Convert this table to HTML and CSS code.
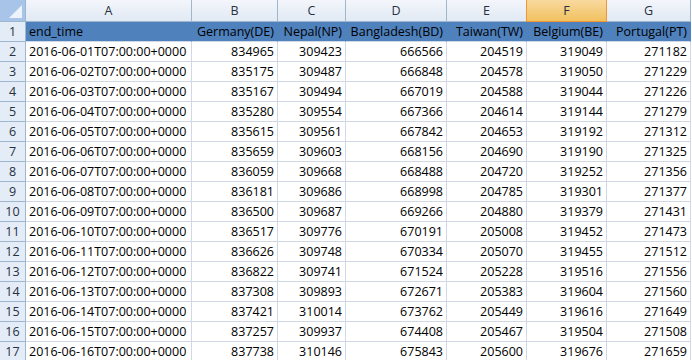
FILE: index.html
```html
<!DOCTYPE html>
<html lang="en">
<head>
  <meta charset="UTF-8">
  <title>Hoja de cálculo</title>
  <link rel="stylesheet" href="styles.css">
</head>
<body>
  <div class="hoja">
    <!-- cabecera de columnas -->
    <div class="esquina"></div>
    <div class="col-hdr">A</div>
    <div class="col-hdr">B</div>
    <div class="col-hdr">C</div>
    <div class="col-hdr">D</div>
    <div class="col-hdr">E</div>
    <div class="col-hdr sel">F</div>
    <div class="col-hdr">G</div>

    <div class="row-hdr">1</div>
    <div class="celda titulo">end_time</div>
    <div class="celda titulo num">Germany(DE)</div>
    <div class="celda titulo num">Nepal(NP)</div>
    <div class="celda titulo num">Bangladesh(BD)</div>
    <div class="celda titulo num">Taiwan(TW)</div>
    <div class="celda titulo num">Belgium(BE)</div>
    <div class="celda titulo num">Portugal(PT)</div>
  </div>

  <script>
    // filas de datos: fecha y valores por país
    const filas = [
      ['2016-06-01', 834965, 309423, 666566, 204519, 319049, 271182],
      ['2016-06-02', 835175, 309487, 666848, 204578, 319050, 271229],
      ['2016-06-03', 835167, 309494, 667019, 204588, 319044, 271226],
      ['2016-06-04', 835280, 309554, 667366, 204614, 319144, 271279],
      ['2016-06-05', 835615, 309561, 667842, 204653, 319192, 271312],
      ['2016-06-06', 835659, 309603, 668156, 204690, 319190, 271325],
      ['2016-06-07', 836059, 309668, 668488, 204720, 319252, 271356],
      ['2016-06-08', 836181, 309686, 668998, 204785, 319301, 271377],
      ['2016-06-09', 836500, 309687, 669266, 204880, 319379, 271431],
      ['2016-06-10', 836517, 309776, 670191, 205008, 319452, 271473],
      ['2016-06-11', 836626, 309748, 670334, 205070, 319455, 271512],
      ['2016-06-12', 836822, 309741, 671524, 205228, 319516, 271556],
      ['2016-06-13', 837308, 309893, 672671, 205383, 319604, 271560],
      ['2016-06-14', 837421, 310014, 673762, 205449, 319616, 271649],
      ['2016-06-15', 837257, 309937, 674408, 205467, 319504, 271508],
      ['2016-06-16', 837738, 310146, 675843, 205600, 319676, 271659]
    ];

    const hoja = document.querySelector('.hoja');
    filas.forEach((fila, i) => {
      let html = `<div class="row-hdr">${i + 2}</div>`;
      html += `<div class="celda">${fila[0]}T07:00:00+0000</div>`;
      fila.slice(1).forEach(valor => {
        html += `<div class="celda num">${valor}</div>`;
      });
      hoja.insertAdjacentHTML('beforeend', html);
    });
  </script>
</body>
</html>
```

FILE: styles.css
```css
:root {
  --borde-cab: #9eb6ce;
  --rejilla: #d0d7e5;
  --azul-titulo: #4f81bd;
}

body {
  margin: 0;
  background: #fff;
  font-family: 'Open Sans', 'Liberation Sans', sans-serif;
  font-size: 12.5px;
  color: #000;
  overflow: hidden;
}

.hoja {
  display: grid;
  grid-template-columns: 26px 166px 86px 68px 101px 80px 80px 84px;
  grid-template-rows: 22px;
  grid-auto-rows: 20px;
  width: 691px;
}

.hoja > div {
  box-sizing: border-box;
  white-space: nowrap;
  overflow: hidden;
  display: flex;
  align-items: center;
}

/* esquina superior */
.esquina {
  position: relative;
  background: #a9c4e9;
  border-right: 1px solid var(--borde-cab);
  border-bottom: 1px solid var(--borde-cab);
}

.esquina::after {
  content: '';
  position: absolute;
  right: 3px;
  bottom: 3px;
  width: 0;
  height: 0;
  border-left: 13px solid transparent;
  border-bottom: 13px solid #eef3fb;
}

/* cabeceras */
.col-hdr {
  justify-content: center;
  background: linear-gradient(to bottom, #f3f6fb, #e1e9f4);
  border-right: 1px solid var(--borde-cab);
  border-bottom: 1px solid var(--borde-cab);
  color: #27303d;
}

.col-hdr.sel {
  background: linear-gradient(to bottom, #f9d99f, #f1c15f);
  border-right: 1px solid #f29536;
  border-left: 1px solid #f29536;
  border-bottom-color: #f29536;
  margin-left: -1px;
}

.row-hdr {
  justify-content: center;
  background: #e4ecf7;
  border-right: 1px solid var(--borde-cab);
  border-bottom: 1px solid var(--borde-cab);
  color: #27303d;
}

/* celdas */
.celda {
  padding: 0 3px;
  border-right: 1px solid var(--rejilla);
  border-bottom: 1px solid var(--rejilla);
}

.celda.num {
  justify-content: flex-end;
}

.celda.titulo {
  background: var(--azul-titulo);
  border-right-color: var(--azul-titulo);
}
```
